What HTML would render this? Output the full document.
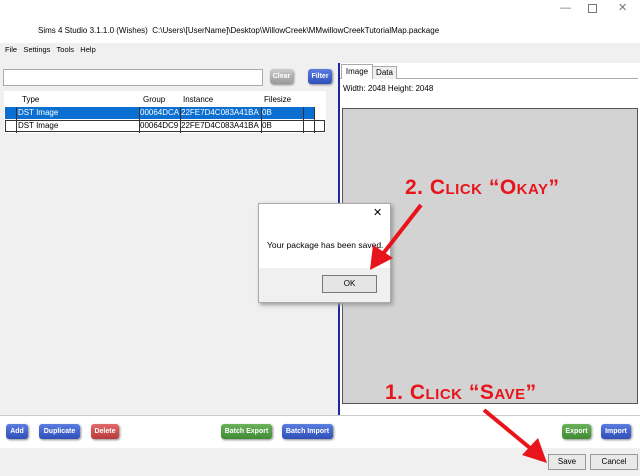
<html><head><style>
body{margin:0;width:640px;height:476px;position:relative;font-family:"Liberation Sans",sans-serif;background:#fff;overflow:hidden;font-size:8px;color:#000}
.a{position:absolute}
.btn{position:absolute;height:15px;border-radius:3px;color:#fff;font-size:7px;font-weight:bold;text-align:center;line-height:15px;box-shadow:1px 1px 2px #888}
.bl{background:linear-gradient(#5a7de0,#2f4fb8)}
.gr{background:linear-gradient(#6bb25a,#3f8a33)}
.rd{background:linear-gradient(#e06a6a,#b83a3a)}
.gy{background:linear-gradient(#ccc,#999)}
.wb{position:absolute;background:#e9e9e9;border:1px solid #999;font-size:8px;text-align:center}
.cl{position:absolute;color:#e8141b;font-weight:bold;font-size:21px;font-variant:small-caps;white-space:nowrap;letter-spacing:0.5px}
</style></head><body>
<div class="a" style="left:38px;top:26px;font-size:8px">Sims 4 Studio 3.1.1.0 (Wishes)&nbsp; C:\Users\[UserName]\Desktop\WillowCreek\MMwillowCreekTutorialMap.package</div>
<div class="a" style="left:560px;top:2px;font-size:11px;color:#777">—</div>
<div class="a" style="left:588px;top:4px;width:7px;height:7px;border:1px solid #777"></div>
<div class="a" style="left:618px;top:1px;font-size:11px;color:#777">✕</div>
<div class="a" style="left:0;top:43px;width:640px;height:20px;background:#f0f0f0"></div>
<div class="a" style="left:5px;top:45px;font-size:7.5px">File&nbsp;&nbsp; Settings&nbsp;&nbsp; Tools&nbsp;&nbsp; Help</div>
<div class="a" style="left:0;top:63px;width:338px;height:352px;background:#f0f0f0"></div>
<div class="a" style="left:3px;top:69px;width:258px;height:15px;background:#fff;border:1px solid #aaa"></div>
<div class="btn gy" style="left:270px;top:69px;width:23px">Clear</div>
<div class="btn bl" style="left:308px;top:69px;width:24px">Filter</div>
<div class="a" style="left:4px;top:91px;width:322px;height:42px;background:#fff"></div>
<div class="a" style="left:22px;top:95px">Type</div><div class="a" style="left:143px;top:95px">Group</div><div class="a" style="left:183px;top:95px">Instance</div><div class="a" style="left:264px;top:95px">Filesize</div>
<div class="a" style="left:5px;top:107px;width:310px;height:12px;background:#0a6fd1"></div>
<div class="a" style="left:18px;top:108px;color:#fff">DST Image</div><div class="a" style="left:140px;top:108px;color:#fff">00064DCA</div><div class="a" style="left:181px;top:108px;color:#fff">22FE7D4C083A41BA</div><div class="a" style="left:262px;top:108px;color:#fff">0B</div>
<div class="a" style="left:5px;top:120px;width:320px;height:12px;border:1px solid #333;box-sizing:border-box"></div>
<div class="a" style="left:18px;top:121px">DST Image</div><div class="a" style="left:140px;top:121px">00064DC9</div><div class="a" style="left:181px;top:121px">22FE7D4C083A41BA</div><div class="a" style="left:262px;top:121px">0B</div>
<div class="a" style="left:16px;top:107px;width:1px;height:26px;background:#333"></div>
<div class="a" style="left:139px;top:107px;width:1px;height:26px;background:#333"></div>
<div class="a" style="left:180px;top:107px;width:1px;height:26px;background:#333"></div>
<div class="a" style="left:261px;top:107px;width:1px;height:26px;background:#333"></div>
<div class="a" style="left:303px;top:107px;width:1px;height:26px;background:#333"></div>
<div class="a" style="left:314px;top:107px;width:1px;height:26px;background:#333"></div>
<div class="a" style="left:338px;top:63px;width:2px;height:352px;background:#1a2a9a"></div>
<div class="a" style="left:340px;top:78px;width:298px;height:1px;background:#aaa"></div>
<div class="a" style="left:341px;top:64px;width:30px;height:14px;background:#fff;border:1px solid #aaa;border-bottom:none;text-align:center;line-height:14px">Image</div>
<div class="a" style="left:372px;top:66px;width:23px;height:12px;background:#f0f0f0;border:1px solid #aaa;border-bottom:none;text-align:center;line-height:12px">Data</div>
<div class="a" style="left:343px;top:84px">Width: 2048 Height: 2048</div>
<div class="a" style="left:342px;top:108px;width:294px;height:294px;background:#d3d3d3;border:1px solid #555"></div>
<div class="a" style="left:0;top:415px;width:640px;height:1px;background:#ccc"></div>
<div class="btn bl" style="left:6px;top:424px;width:22px">Add</div>
<div class="btn bl" style="left:39px;top:424px;width:41px">Duplicate</div>
<div class="btn rd" style="left:91px;top:424px;width:28px">Delete</div>
<div class="btn gr" style="left:221px;top:424px;width:51px">Batch Export</div>
<div class="btn bl" style="left:282px;top:424px;width:51px">Batch Import</div>
<div class="btn gr" style="left:562px;top:424px;width:29px">Export</div>
<div class="btn bl" style="left:601px;top:424px;width:30px">Import</div>
<div class="a" style="left:0;top:448px;width:640px;height:28px;background:#f0f0f0"></div>
<div class="wb" style="left:548px;top:454px;width:36px;height:14px;line-height:14px">Save</div>
<div class="wb" style="left:590px;top:454px;width:46px;height:14px;line-height:14px">Cancel</div>
<div class="a" style="left:258px;top:203px;width:131px;height:98px;background:#f0f0f0;border:1px solid #aaa;box-shadow:2px 2px 4px #999"></div>
<div class="a" style="left:259px;top:204px;width:131px;height:64px;background:#fff"></div>
<div class="a" style="left:373px;top:206px;font-size:11px">✕</div>
<div class="a" style="left:267px;top:240px;font-size:8.5px">Your package has been saved.</div>
<div class="wb" style="left:322px;top:275px;width:53px;height:16px;line-height:16px;background:#e5e5e5;border-color:#777">OK</div>
<div class="cl" style="left:405px;top:176px">2. Click “Okay”</div>
<div class="cl" style="left:385px;top:381px">1. Click “Save”</div>
<svg class="a" style="left:0;top:0" width="640" height="476">
<line x1="421" y1="205" x2="382" y2="255" stroke="#e8141b" stroke-width="4"/>
<polygon points="370,270 373,245 393,258" fill="#e8141b"/>
<line x1="484" y1="410" x2="530" y2="448" stroke="#e8141b" stroke-width="4"/>
<polygon points="547,463 522,455 538,438" fill="#e8141b"/>
</svg>
</body></html>
